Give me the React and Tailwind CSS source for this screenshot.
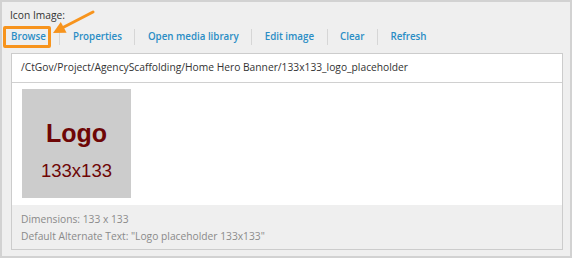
export default function App() {
    const links = ['Browse', 'Properties', 'Open media library', 'Edit image', 'Clear', 'Refresh'];
    return (
        <div className="w-[574px] h-[260px] bg-white" style={{ fontFamily: '"Open Sans", "Liberation Sans", sans-serif' }}>
            <div className="relative w-[572px] h-[258px] border-2 border-[#d2d2d2] bg-[#efefef]">
                <div className="pl-[8px] pt-[6px] text-[10.25px] leading-[14px] text-[#333]">Icon Image:</div>
                <div className="flex items-center h-[22px] mt-[4px] pl-[1px] text-[9.75px] font-semibold text-[#2a8dc5]">
                    {links.map((l, i) => (
                        <div key={l} className="flex items-center">
                            {i > 0 && (
                                <span className={`w-px h-[16px] bg-[#d6d6d6] ${i === 1 ? 'ml-[8px] mr-[13px]' : 'mx-[12.5px]'}`}></span>
                            )}
                            {i === 0 ? (
                                <span className="border-[3px] border-[#f7941d] rounded-[2px] pl-[5px] pr-[2px] h-[22px] flex items-center">{l}</span>
                            ) : (
                                <span>{l}</span>
                            )}
                        </div>
                    ))}
                </div>
                <div className="ml-[9px] mt-[5px] w-[552px] h-[197px] border border-[#cccccc] bg-white flex flex-col">
                    <div className="h-[29px] border-b border-[#d0d0d0] flex items-center pl-[9px] text-[10.25px] text-[#333]">
                        /CtGov/Project/AgencyScaffolding/Home Hero Banner/133x133_logo_placeholder
                    </div>
                    <div className="flex-1 pl-[10px] pt-[6px]">
                        <div className="w-[109px] h-[109px] bg-[#cccccc] flex flex-col items-center pt-[30px] text-[#6e0606]" style={{ fontFamily: '"Liberation Sans", Arial, sans-serif' }}>
                            <div className="text-[25px] font-bold leading-[28px]">Logo</div>
                            <div className="text-[18.5px] leading-[22px] mt-[13px]">133x133</div>
                        </div>
                    </div>
                    <div className="h-[44px] bg-[#efefef] pl-[9px] pt-[6px] text-[10.25px] leading-[17px] text-[#8a8a8a]">
                        <div>Dimensions: 133 x 133</div>
                        <div>Default Alternate Text: "Logo placeholder 133x133"</div>
                    </div>
                </div>
                <svg className="absolute left-[-2px] top-[-2px] pointer-events-none" width="120" height="50" viewBox="0 0 120 50">
                    <line x1="93" y1="12" x2="63" y2="27.5" stroke="#f7941d" strokeWidth="3" strokeLinecap="round" />
                    <polygon points="53,33 60.8,22 66.6,32.8" fill="#f7941d" />
                </svg>
            </div>
        </div>
    );
}
